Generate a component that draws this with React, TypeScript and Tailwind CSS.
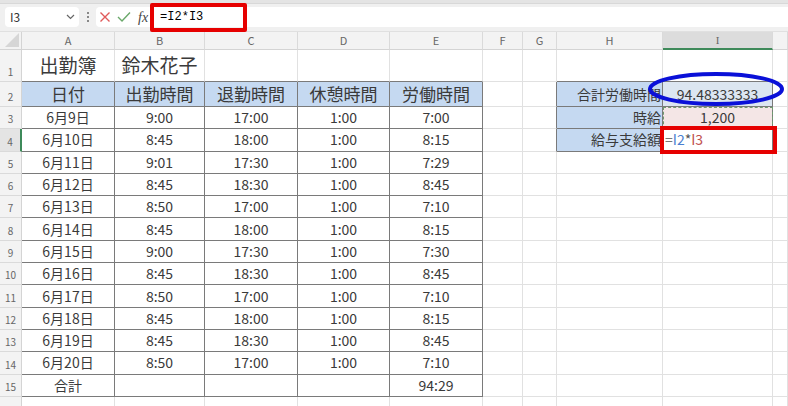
import React from 'react';

const FONT = { fontFamily: '"Noto Sans CJK JP", "Noto Sans", sans-serif' };

const COL_W = [22, 93, 90, 93, 92, 93, 40, 34, 106, 110, 15];
const COL_NAMES = ['', 'A', 'B', 'C', 'D', 'E', 'F', 'G', 'H', 'I', ''];
const ROW_H = ['32px', '25px', ...Array(13).fill('22.3px'), '12px'];

const records = [
  ['6月9日', '9:00', '17:00', '1:00', '7:00'],
  ['6月10日', '8:45', '18:00', '1:00', '8:15'],
  ['6月11日', '9:01', '17:30', '1:00', '7:29'],
  ['6月12日', '8:45', '18:30', '1:00', '8:45'],
  ['6月13日', '8:50', '17:00', '1:00', '7:10'],
  ['6月14日', '8:45', '18:00', '1:00', '8:15'],
  ['6月15日', '9:00', '17:30', '1:00', '7:30'],
  ['6月16日', '8:45', '18:30', '1:00', '8:45'],
  ['6月17日', '8:50', '17:00', '1:00', '7:10'],
  ['6月18日', '8:45', '18:00', '1:00', '8:15'],
  ['6月19日', '8:45', '18:30', '1:00', '8:45'],
  ['6月20日', '8:50', '17:00', '1:00', '7:10'],
];

// row 1..16, col 1..10
const inMain = (r: number, c: number) => r >= 2 && r <= 15 && c >= 1 && c <= 5;
const inSide = (r: number, c: number) => r >= 2 && r <= 4 && (c === 8 || c === 9);
const inTable = (r: number, c: number) => inMain(r, c) || inSide(r, c);

type CellInfo = { text?: React.ReactNode; cls?: string };

function cellInfo(r: number, c: number): CellInfo {
  if (r === 1 && c === 1) return { text: '出勤簿', cls: 'justify-center text-[19px]' };
  if (r === 1 && c === 2) return { text: '鈴木花子', cls: 'justify-center text-[19px]' };
  if (r === 2 && c >= 1 && c <= 5) {
    const h = ['日付', '出勤時間', '退勤時間', '休憩時間', '労働時間'][c - 1];
    return { text: h, cls: 'justify-center bg-[#c5d9f1] text-[17px]' };
  }
  if (r >= 3 && r <= 14 && c >= 1 && c <= 5) {
    return { text: records[r - 3][c - 1], cls: 'justify-center text-[14px]' };
  }
  if (r === 15 && c === 1) return { text: '合計', cls: 'justify-center text-[14px]' };
  if (r === 15 && c === 5) return { text: '94:29', cls: 'justify-center text-[14px]' };
  if (c === 8 && r >= 2 && r <= 4) {
    const h = ['合計労働時間', '時給', '給与支給額'][r - 2];
    return { text: h, cls: 'justify-end pr-px bg-[#c5d9f1] text-[14px] overflow-hidden whitespace-nowrap' };
  }
  if (c === 9 && r === 2) return { text: '94.48333333', cls: 'justify-center bg-[#dce6f1] text-[14px]' };
  if (c === 9 && r === 3)
    return { text: '1,200', cls: 'justify-center bg-[#f4e6e6] text-[14px] outline-1 outline-dashed outline-[#6f9a6f] -outline-offset-1' };
  if (c === 9 && r === 4)
    return {
      text: (
        <span>
          <span className="text-[#777]">=</span>
          <span className="text-[#4a7fd0]">I2</span>
          <span className="text-[#555]">*</span>
          <span className="text-[#c0504d]">I3</span>
        </span>
      ),
      cls: 'justify-start pl-0.5 text-[14px]',
    };
  return {};
}

function SheetCell({ r, c }: { r: number; c: number }) {
  const info = cellInfo(r, c);
  const darkR = inTable(r, c) || inTable(r, c + 1);
  const darkB = inTable(r, c) || inTable(r + 1, c);
  return (
    <div
      className={`flex items-center border-r border-b text-[#3a3a3a] ${darkR ? 'border-r-[#7a7a7a]' : 'border-r-[#e1e1e1]'} ${
        darkB ? 'border-b-[#7a7a7a]' : 'border-b-[#e1e1e1]'
      } ${info.cls ?? ''}`}
    >
      {info.text}
    </div>
  );
}

function FormulaBar() {
  return (
    <div className="relative h-[32px] bg-[#f0f0f0] border-b border-[#e0e0e0]">
      <div className="h-[4px] bg-[#e4e4e4] border-b border-[#d8d8d8]" />
      <div className="flex items-center h-[24px] pt-[2px]">
        <div className="ml-[5px] w-[74px] h-[20px] bg-white rounded-[4px] flex items-center justify-between pl-[5px] pr-[4px]">
          <span className="text-[12px] text-[#333]">I3</span>
          <svg width="9" height="6" viewBox="0 0 9 6">
            <path d="M1 1 L4.5 4.5 L8 1" stroke="#666" strokeWidth="1.2" fill="none" />
          </svg>
        </div>
        <div className="w-[17px] flex flex-col items-center gap-[2px]">
          <span className="w-[2px] h-[2px] bg-[#888]" />
          <span className="w-[2px] h-[2px] bg-[#888]" />
          <span className="w-[2px] h-[2px] bg-[#888]" />
        </div>
        <div className="flex-1 h-[20px] bg-white rounded-l-[4px] flex items-center">
          <svg width="12" height="12" viewBox="0 0 12 12" className="ml-[3px]">
            <path d="M1.5 1.5 L10.5 10.5 M10.5 1.5 L1.5 10.5" stroke="#e05a5a" strokeWidth="1.4" />
          </svg>
          <svg width="14" height="12" viewBox="0 0 14 12" className="ml-[6px]">
            <path d="M1 6 L5 10 L13 1.5" stroke="#6aa86a" strokeWidth="1.4" fill="none" />
          </svg>
          <span className="ml-[7px] text-[14px] italic text-[#444]" style={{ fontFamily: '"Liberation Serif", serif' }}>
            fx
          </span>
          <span className="ml-[12px] text-[12px] text-black" style={{ fontFamily: '"Liberation Mono", monospace' }}>
            =I2*I3
          </span>
        </div>
      </div>
      <div className="absolute left-[150px] top-[3px] w-[97px] h-[29px] border-[4px] border-[#e60000] rounded-[2px]" />
    </div>
  );
}

export default function App() {
  const rows = Array.from({ length: 16 }, (_, i) => i + 1);
  const cols = Array.from({ length: 10 }, (_, i) => i + 1);
  return (
    <div className="relative w-[788px] h-[406px] overflow-hidden bg-white" style={FONT}>
      <FormulaBar />
      <div
        className="grid"
        style={{
          gridTemplateColumns: COL_W.map((w) => `${w}px`).join(' '),
          gridTemplateRows: ['18px', ...ROW_H].join(' '),
        }}
      >
        {/* column header row */}
        <div className="bg-[#f3f3f3] border-r border-b border-[#d4d4d4] relative overflow-hidden">
          <div className="absolute right-[2px] bottom-[2px] w-0 h-0 border-l-[14px] border-l-transparent border-b-[14px] border-b-[#d6d6d6]" />
        </div>
        {COL_NAMES.slice(1).map((n, i) => (
          <div
            key={i}
            className={`flex items-center justify-center text-[11px] text-[#666] border-r border-[#dadada] ${
              n === 'I' ? 'bg-[#dcdcdc] border-b-2 border-b-[#3e8a5a]' : 'bg-[#f3f3f3] border-b border-b-[#d4d4d4]'
            }`}
          >
            {n === 'I' ? <span style={{ fontFamily: '"Liberation Serif", serif' }}>I</span> : n}
          </div>
        ))}
        {rows.map((r) => (
          <React.Fragment key={r}>
            <div
              className={`flex items-end justify-center pb-[2px] text-[10px] text-[#666] border-b border-b-[#dadada] ${
                r === 4 ? 'bg-[#e4e4e4] border-r-2 border-r-[#3e8a5a]' : 'bg-[#f3f3f3] border-r border-r-[#d4d4d4]'
              }`}
            >
              {r <= 15 ? r : ''}
            </div>
            {cols.map((c) => (
              <SheetCell key={c} r={r} c={c} />
            ))}
          </React.Fragment>
        ))}
      </div>

      {/* annotations */}
      <svg className="absolute left-[646px] top-[70px]" width="142" height="38" viewBox="0 0 142 38">
        <ellipse cx="70" cy="19" rx="66" ry="15" fill="none" stroke="#0a10d8" strokeWidth="4" />
      </svg>
      <div className="absolute left-[660px] top-[126px] w-[117px] h-[28px] border-[4px] border-[#e60000]" />
    </div>
  );
}
